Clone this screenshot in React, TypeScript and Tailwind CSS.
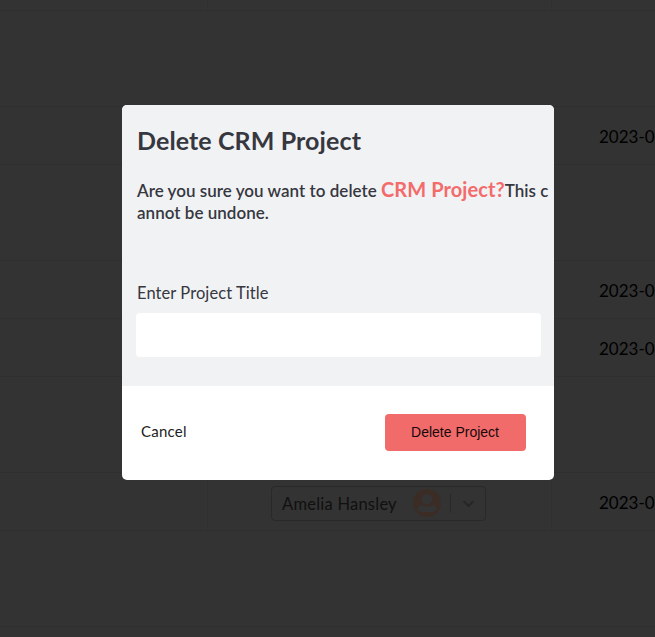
type RowProps = { height: string; date?: string; assignee?: string; columns?: boolean };

function Avatar() {
  return (
    <svg className="mb-px ml-[16px] size-[28px] shrink-0" viewBox="0 0 28 28">
      <circle cx="14" cy="14" r="14" fill="#3b2d26" />
      <circle cx="14" cy="10.2" r="5.3" fill="#343434" />
      <path d="M4.700 20.600C4.800 17.900 6.400 16.300 8.600 16.300c1.800 0 2.700 1.500 5.400 1.500s3.600-1.500 5.400-1.500c2.200 0 3.800 1.600 3.900 4.300-.600 1.500-1.700 2.300-3.200 2.300H7.900c-1.500 0-2.600-.800-3.200-2.300Z" fill="#343434" />
    </svg>
  );
}

function AssigneeSelect({ name }: { name: string }) {
  return (
    <div className="flex h-[35px] w-[215px] items-center rounded-[4px] border border-[#292929] pl-[10px]">
      <span className="w-[115px] whitespace-nowrap pt-[2px] text-[16.5px] tracking-[0.24px] text-[#101010]">{name}</span>
      <Avatar />
      <span className="ml-[9px] h-[19px] w-px bg-[#292929]" />
      <svg className="mt-px ml-[12px] h-[8px] w-[11px]" viewBox="0 0 11 8" fill="none" stroke="#262626" strokeWidth="2" strokeLinecap="round" strokeLinejoin="round">
        <path d="m1.300 1.800 4.200 4.200 4.200-4.200" />
      </svg>
    </div>
  );
}

function Row({ height, date, assignee, columns }: RowProps) {
  const divider = columns ? "border-[#303030]" : "border-transparent";
  return (
    <div className={`flex shrink-0 border-b border-[#2f2f2f] ${height}`}>
      <div className={`w-[208px] shrink-0 border-r ${divider}`} />
      <div className={`flex w-[344px] shrink-0 items-center border-r pt-[4px] pl-[63px] ${divider}`}>
        {assignee && <AssigneeSelect name={assignee} />}
      </div>
      <div className="flex flex-1 items-center overflow-hidden pt-[2px] pl-[47px]">
        {date && <span className="whitespace-nowrap text-[17px] text-black">{date}</span>}
      </div>
    </div>
  );
}

function DeleteDialog() {
  return (
    <div role="dialog" className="flex h-[375px] w-[432px] flex-col overflow-hidden rounded-[5px] bg-white">
      <div className="h-[281px] bg-[#f1f2f4] pl-[14px] text-[#36373f]">
        <h1 className="pt-[19px] pl-px text-[25px] leading-[32px] font-bold tracking-[0.1px] whitespace-nowrap">Delete CRM Project</h1>
        <p className="mt-[22px] h-[46px] pl-px text-[17px] leading-[22px] font-semibold tracking-[0.03px] whitespace-nowrap">
          Are you sure you want to delete{" "}
          <span className="text-[20px] font-bold tracking-[0.08px] text-[#f36b6b]">CRM Project?</span>
          This c
          <br />
          annot be undone.
        </p>
        <label className="mt-[57px] block text-[16.5px] leading-[24px] tracking-[0.08px]">
          <span className="pl-px">Enter Project Title</span>
          <input className="mt-[8px] block h-[44px] w-[405px] rounded-[4px] bg-white px-3 outline-none" />
        </label>
      </div>
      <div className="flex h-[94px] items-center justify-between pr-[28px] pb-[2px] pl-[19px]">
        <button className="pb-px text-[15px] tracking-[0.25px] text-[#222]">Cancel</button>
        <button className="h-[37px] w-[141px] rounded-[4px] bg-[#f26b6b] pt-px pr-px font-['Liberation_Sans',sans-serif] text-[14px] text-[#16090c]">Delete Project</button>
      </div>
    </div>
  );
}

export default function App() {
  return (
    <main className="relative h-[637px] w-[655px] overflow-hidden bg-[#333] font-['Lato',sans-serif]">
      <div className="flex h-full flex-col">
        <Row height="h-[11px]" columns />
        <Row height="h-[96px]" />
        <Row height="h-[58px]" date="2023-01-20" columns />
        <Row height="h-[96px]" />
        <Row height="h-[58px]" date="2023-01-20" columns />
        <Row height="h-[58px]" date="2023-01-20" columns />
        <Row height="h-[96px]" />
        <Row height="h-[58px]" date="2023-01-20" assignee="Amelia Hansley" columns />
        <Row height="h-[96px]" />
      </div>
      <div className="absolute top-[105px] left-[122px]">
        <DeleteDialog />
      </div>
    </main>
  );
}
